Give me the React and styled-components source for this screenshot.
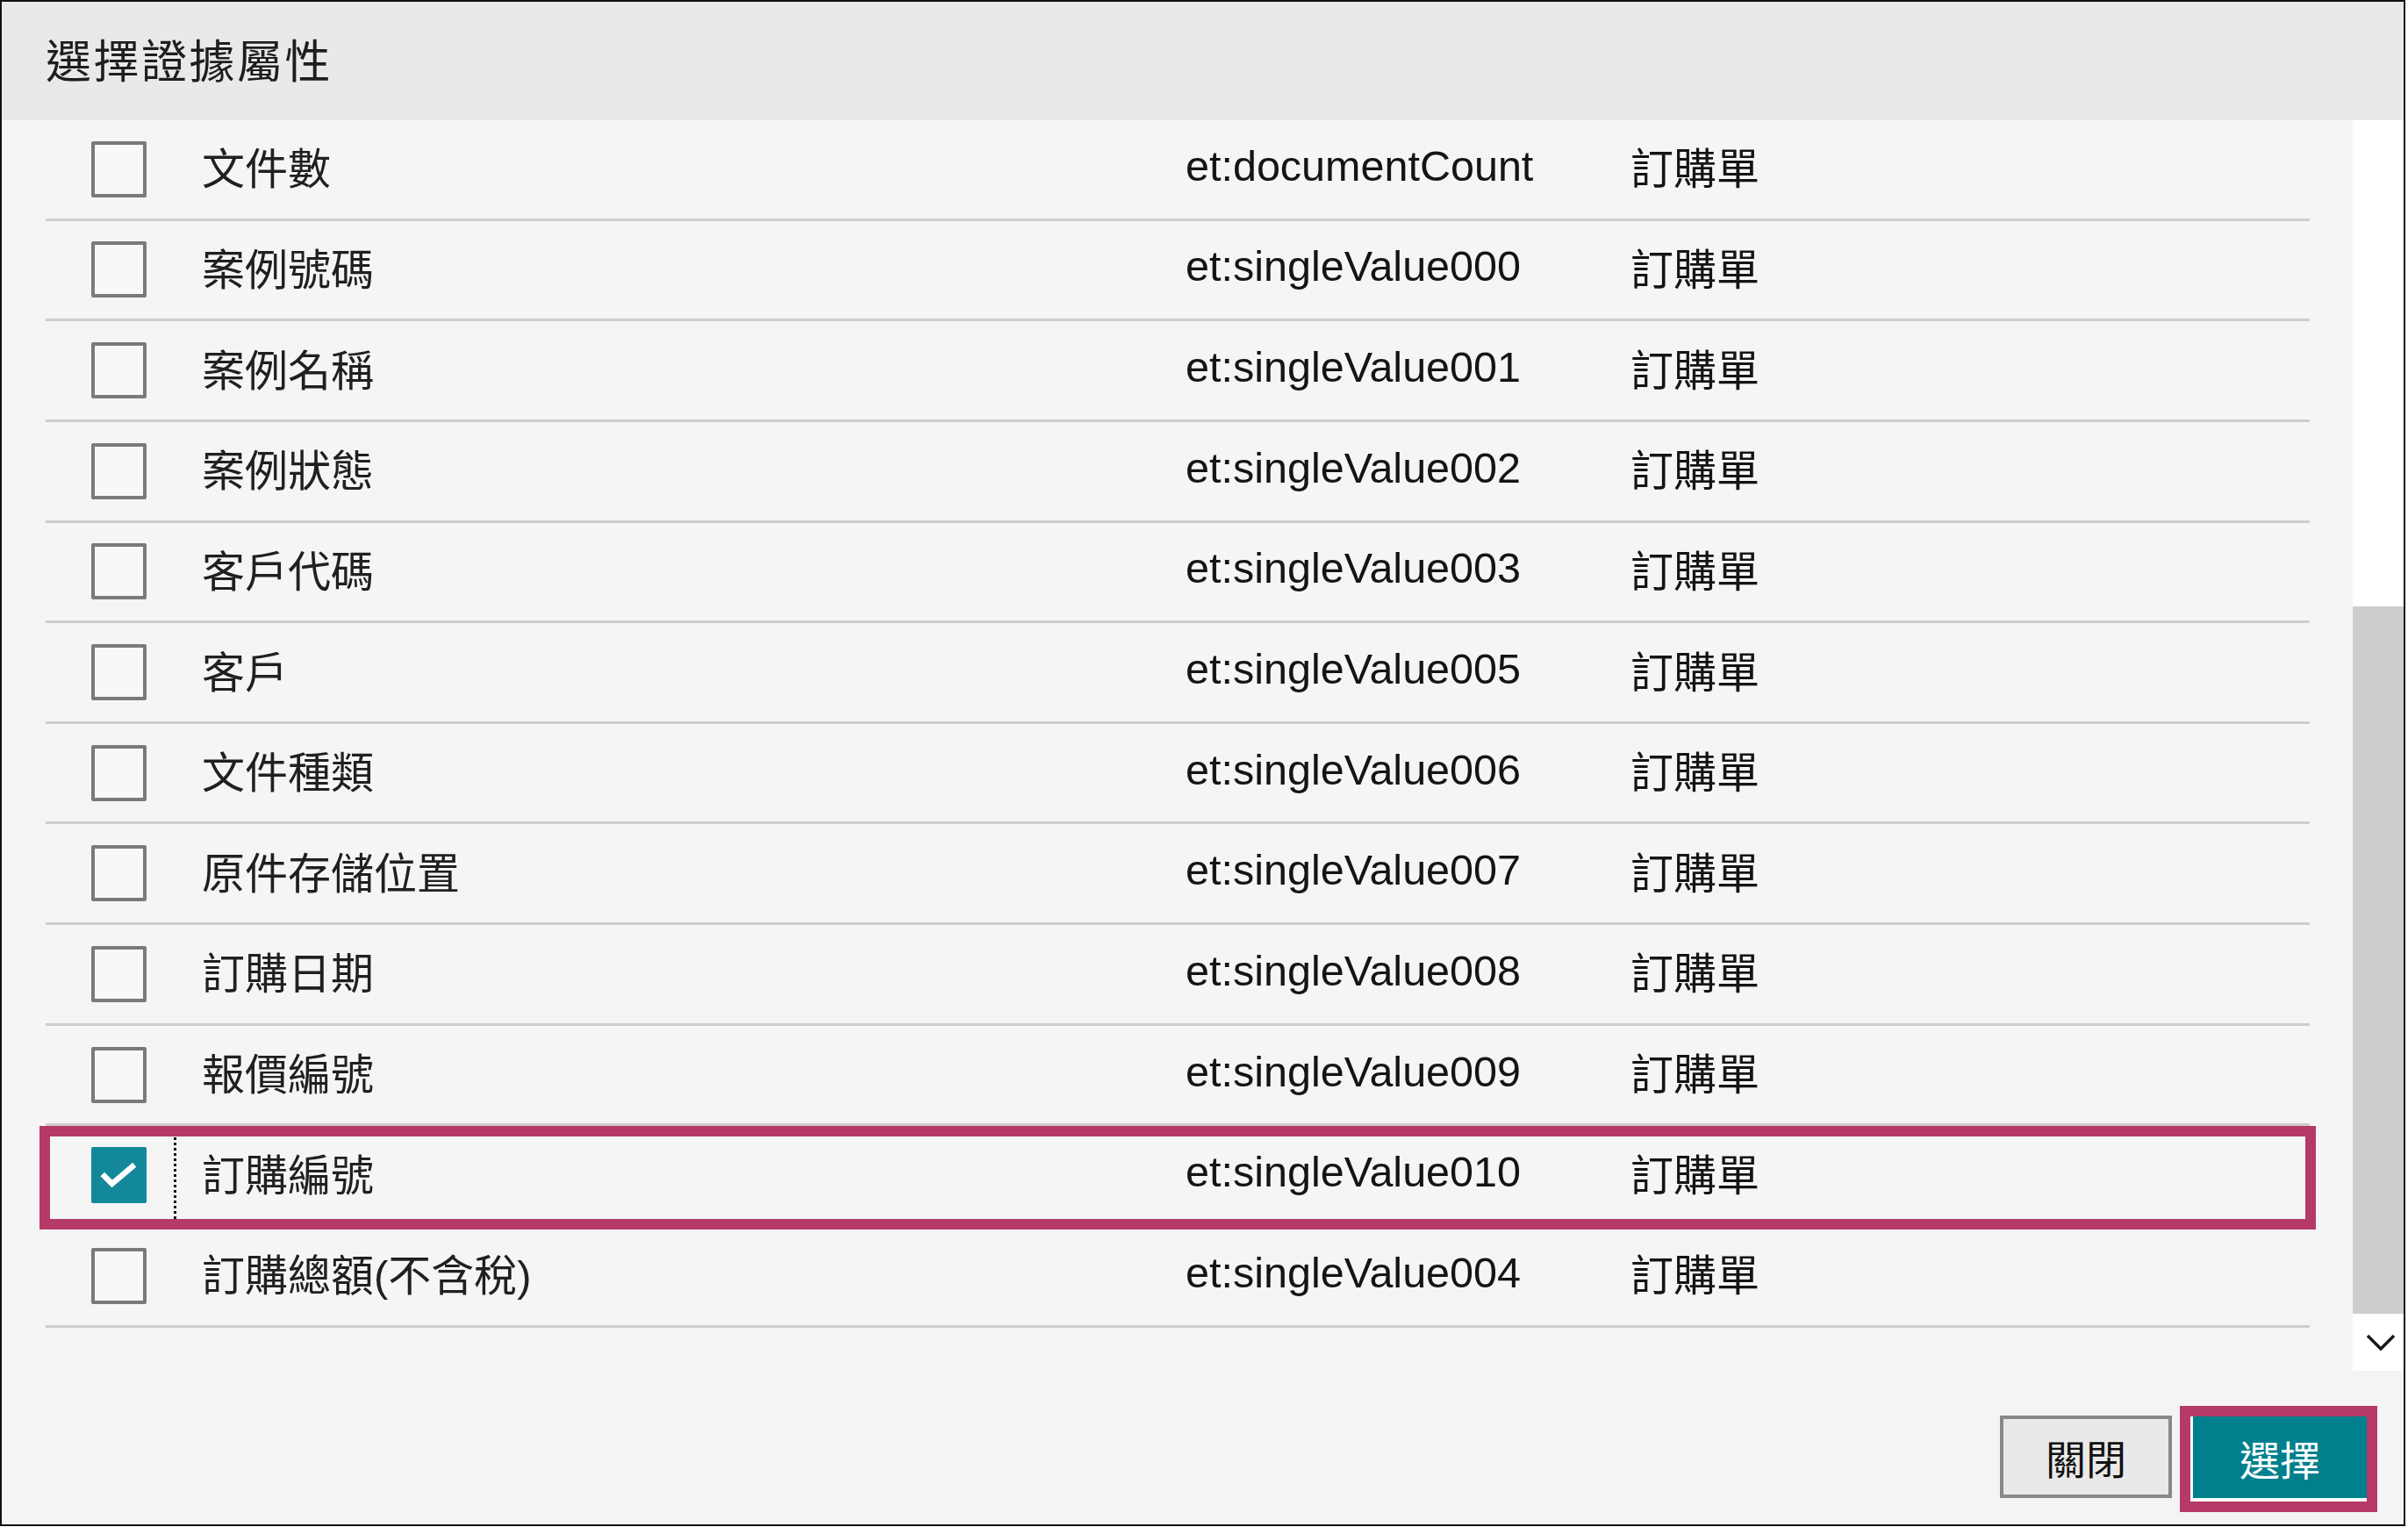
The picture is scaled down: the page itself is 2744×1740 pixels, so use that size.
import React from "react";
import styled, { createGlobalStyle } from "styled-components";

const rows = [
  { label: "文件數", code: "et:documentCount" },
  { label: "案例號碼", code: "et:singleValue000" },
  { label: "案例名稱", code: "et:singleValue001" },
  { label: "案例狀態", code: "et:singleValue002" },
  { label: "客戶代碼", code: "et:singleValue003" },
  { label: "客戶", code: "et:singleValue005" },
  { label: "文件種類", code: "et:singleValue006" },
  { label: "原件存儲位置", code: "et:singleValue007" },
  { label: "訂購日期", code: "et:singleValue008" },
  { label: "報價編號", code: "et:singleValue009" },
  { label: "訂購編號", code: "et:singleValue010", checked: true },
  { label: "訂購總額(不含稅)", code: "et:singleValue004" },
];

const App = () => {
  return (
    <>
      <GlobalStyle />
      <Dialog>
        <Header>
          <Title>選擇證據屬性</Title>
        </Header>
        <Body>
          <List>
            {rows.map((r) => (
              <Row key={r.code}>
                <CheckCell $focused={r.checked}>
                  <Box $checked={r.checked}>
                    {r.checked && (
                      <svg width="64" height="64" viewBox="0 0 64 64">
                        <polyline
                          points="13,31 24,42 50,20"
                          fill="none"
                          stroke="#fff"
                          strokeWidth="6.5"
                        />
                      </svg>
                    )}
                  </Box>
                </CheckCell>
                <Label>{r.label}</Label>
                <Code>{r.code}</Code>
                <Type>訂購單</Type>
                {r.checked && <Mark $top="0px" $bottom="-6px" $side="-7px" />}
              </Row>
            ))}
          </List>
          <Scrollbar>
            <Track />
            <Thumb />
            <ArrowButton>
              <svg width="36" height="22" viewBox="0 0 36 22">
                <polyline
                  points="3,3 18,18 33,3"
                  fill="none"
                  stroke="#1a1a1a"
                  strokeWidth="3.5"
                />
              </svg>
            </ArrowButton>
          </Scrollbar>
        </Body>
        <Footer>
          <CloseButton>關閉</CloseButton>
          <SelectWrap>
            <SelectButton>選擇</SelectButton>
            <Mark $top="-12px" $bottom="-13px" $side="-12px" />
          </SelectWrap>
        </Footer>
      </Dialog>
    </>
  );
};

export default App;

const GlobalStyle = createGlobalStyle`
  body {
    margin: 0;
    background: #ffffff;
    font-family: "Liberation Sans", "Noto Sans CJK TC", sans-serif;
  }
`;

const Dialog = styled.div`
  width: 2741px;
  height: 1739px;
  box-sizing: border-box;
  border: 2px solid #111;
  background: #f4f4f4;
  display: flex;
  flex-direction: column;
`;

const Header = styled.div`
  height: 135px;
  box-sizing: border-box;
  flex-shrink: 0;
  background: #e9e9e9;
  display: flex;
  align-items: center;
  padding: 0 0 6px 50px;
`;

const Title = styled.h1`
  margin: 0;
  font-family: "Noto Sans CJK TC", sans-serif;
  font-weight: 400;
  font-size: 52px;
  letter-spacing: 2.5px;
  color: #1e1e1e;
`;

const Body = styled.div`
  height: 1425px;
  flex-shrink: 0;
  display: flex;
`;

const List = styled.div`
  flex: 1;
  padding: 0 49px 0 50px;
  background: #f5f5f5;
`;

const Row = styled.div`
  position: relative;
  height: 114.65px;
  box-sizing: border-box;
  border-bottom: 3px solid #cdcdcd;
  display: grid;
  grid-template-columns: 149px 1150px 507px 1fr;
  align-items: center;
`;

const CheckCell = styled.div`
  height: 100%;
  box-sizing: border-box;
  padding-left: 52px;
  display: flex;
  align-items: center;
  outline: ${(p) => (p.$focused ? "3px dotted #111" : "none")};
  outline-offset: -3px;
`;

const Box = styled.div`
  width: 63px;
  height: 64px;
  box-sizing: border-box;
  border-radius: 2px;
  border: ${(p) => (p.$checked ? "none" : "4px solid #7a7a7a")};
  background: ${(p) => (p.$checked ? "#13889a" : "#f8f8f8")};
  display: flex;
  align-items: center;
  justify-content: center;
`;

const Label = styled.div`
  padding: 0 0 8px 29px;
  font-family: "Liberation Sans", "Noto Sans CJK TC", sans-serif;
  font-size: 49px;
  color: #202020;
  white-space: nowrap;
`;

const Code = styled.div`
  padding-bottom: 8px;
  font-family: "Liberation Sans", sans-serif;
  font-size: 48.5px;
  color: #141414;
  white-space: nowrap;
`;

const Type = styled.div`
  padding-bottom: 8px;
  font-family: "Noto Sans CJK TC", sans-serif;
  font-size: 49px;
  color: #141414;
`;

const Mark = styled.div`
  position: absolute;
  top: ${(p) => p.$top};
  bottom: ${(p) => p.$bottom};
  left: ${(p) => p.$side};
  right: ${(p) => p.$side};
  border: 12px solid #b53a67;
  pointer-events: none;
  z-index: 2;
`;

const Scrollbar = styled.div`
  width: 58px;
  flex-shrink: 0;
  display: flex;
  flex-direction: column;
`;

const Track = styled.div`
  height: 554px;
  background: #ffffff;
`;

const Thumb = styled.div`
  height: 806px;
  background: #cdcdcd;
`;

const ArrowButton = styled.div`
  height: 65px;
  background: #ffffff;
  display: flex;
  align-items: center;
  justify-content: center;
  padding-left: 6px;
`;

const Footer = styled.div`
  flex: 1;
  display: flex;
  justify-content: flex-end;
  align-items: flex-start;
  gap: 21px;
  padding: 51px 42px 0 0;
`;

const CloseButton = styled.button`
  width: 196px;
  height: 94px;
  box-sizing: border-box;
  border: 4px solid #888888;
  background: #e9e9e9;
  font-family: "Noto Sans CJK TC", sans-serif;
  font-size: 46px;
  color: #111;
  padding: 0;
`;

const SelectWrap = styled.div`
  position: relative;
  margin-top: 1px;
`;

const SelectButton = styled.button`
  width: 201px;
  height: 96px;
  box-sizing: border-box;
  border: none;
  border-left: 3px solid #ffffff;
  border-bottom: 3px solid #ffffff;
  background: #00808d;
  font-family: "Noto Sans CJK TC", sans-serif;
  font-size: 46px;
  color: #ffffff;
  padding: 0;
  display: block;
`;
